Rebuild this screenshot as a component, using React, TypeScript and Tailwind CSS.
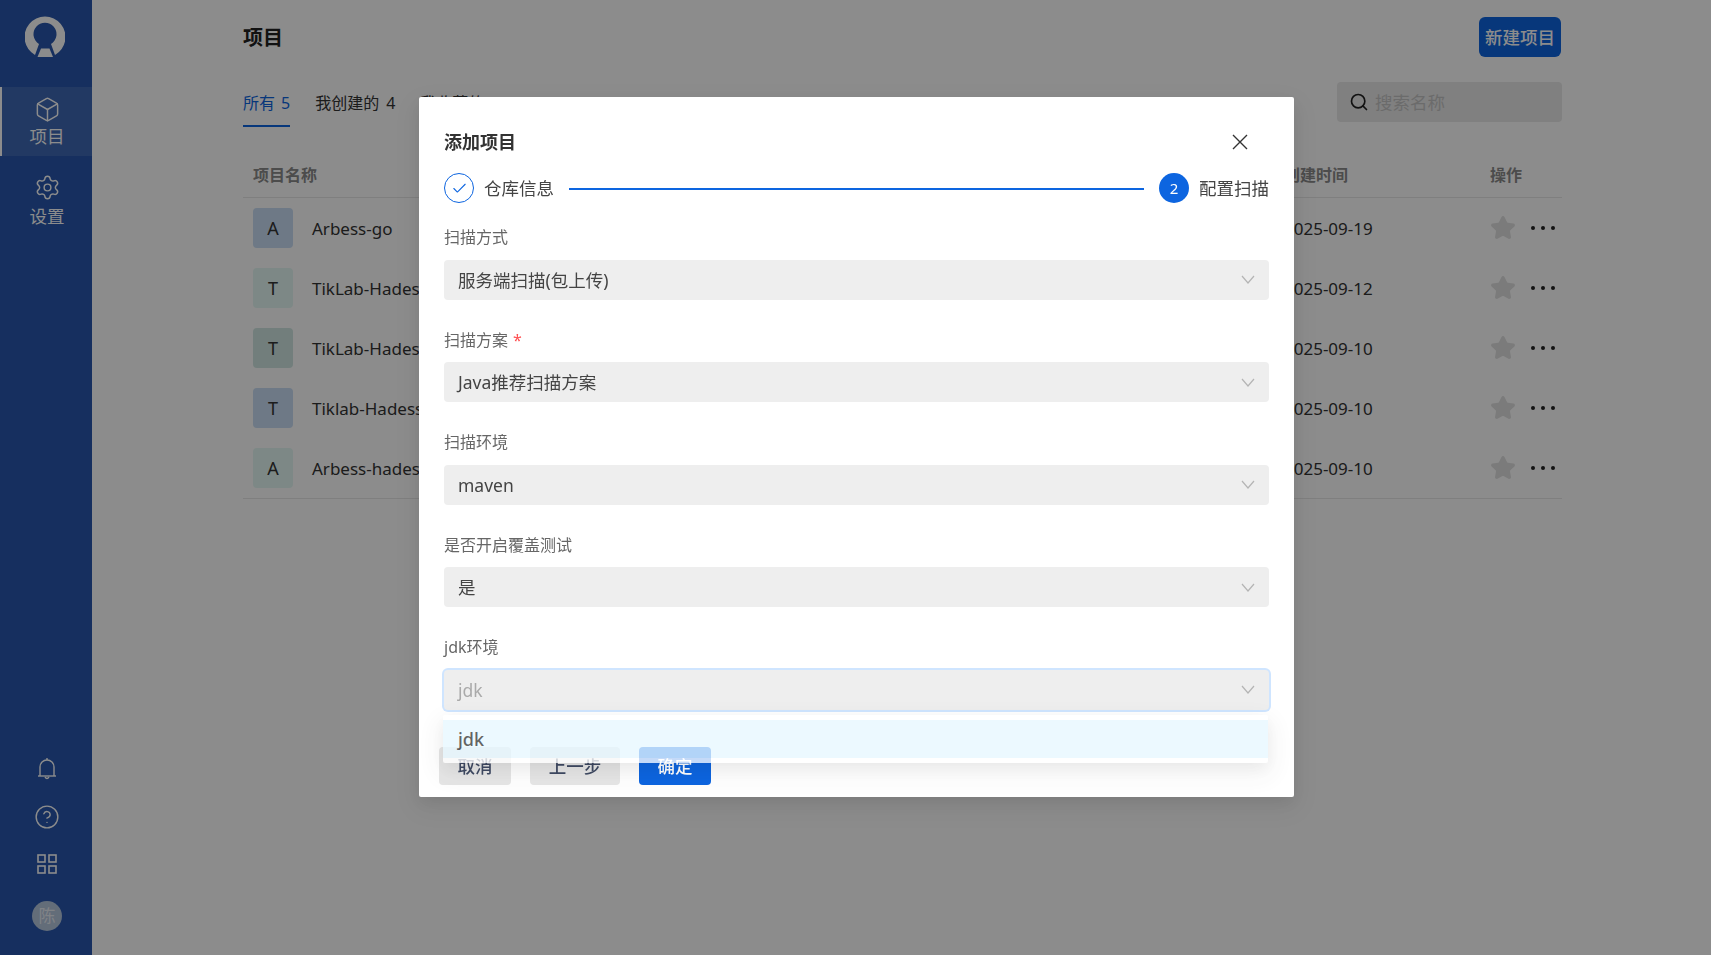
import React from 'react';
import { Box, Settings, CircleHelp, Search, Star, Check } from 'lucide-react';

const FONT = { fontFamily: '"Noto Sans", "Noto Sans CJK SC", sans-serif' };

type Project = { initial: string; name: string; color: string; date: string };

const projects: Project[] = [
  { initial: 'A', name: 'Arbess-go', color: 'bg-[#c8dcf4]', date: '2025-09-19' },
  { initial: 'T', name: 'TikLab-Hadess', color: 'bg-[#e4f8f4]', date: '2025-09-12' },
  { initial: 'T', name: 'TikLab-Hadess', color: 'bg-[#cfe6e2]', date: '2025-09-10' },
  { initial: 'T', name: 'Tiklab-Hadess', color: 'bg-[#c8dcf4]', date: '2025-09-10' },
  { initial: 'A', name: 'Arbess-hadess', color: 'bg-[#e4f8f4]', date: '2025-09-10' },
];

function Logo() {
  return (
    <svg viewBox="25 15 40 42" className="h-[42px] w-[40px]" fill="#ffffff">
      <path d="M35 54 A20.5 20.5 0 1 1 55 54 L51 43 A11.5 11.5 0 1 0 39 43 Z" />
      <path d="M37.5 56 L41 47.5 H49.5 L53 56 Z" />
    </svg>
  );
}

function Chevron({ className }: { className?: string }) {
  return (
    <svg viewBox="0 0 14 9" className={className} fill="none" stroke="#b4b4b4" strokeWidth="1.2">
      <path d="M1 1 L7 8 L13 1" />
    </svg>
  );
}

function Field({ label, value, required }: { label: string; value: string; required?: boolean }) {
  return (
    <div className="h-[102.5px]">
      <div className="mb-[10.5px] h-[24px] -translate-y-[0.5px] text-[16px] leading-[24px] text-[#666]">
        {label}
        {required && <span className="ml-[5px] text-[#ff4d4f]">*</span>}
      </div>
      <div className="flex h-[40px] items-center justify-between rounded-[4px] bg-[#eeeeee] pl-[14px] pr-[14px] text-[17.5px] text-[#444]">
        <span>{value}</span>
        <Chevron className="h-[9px] w-[14px]" />
      </div>
    </div>
  );
}

function Sidebar() {
  return (
    <aside className="flex w-[92px] shrink-0 flex-col bg-[#2857ad] text-white">
      <div className="flex h-[87px] justify-center pt-[16px] pr-[2px]">
        <Logo />
      </div>
      <div className="flex h-[69px] flex-col items-center border-l-2 border-white bg-white/10 pt-[9px]">
        <Box size={27} strokeWidth={1.3} className="shrink-0" />
        <span className="mt-[0.5px] text-[17.5px] leading-[24px]">项目</span>
      </div>
      <div className="flex h-[69px] flex-col items-center pt-[17.5px] pl-[2px]">
        <Settings size={27} strokeWidth={1.3} className="shrink-0" />
        <span className="mt-[3.5px] shrink-0 text-[17.5px] leading-[24px]">设置</span>
      </div>
      <div className="mt-auto flex flex-col items-center pb-[24px] pl-[2px]">
        <svg viewBox="0 0 20 24" className="h-[24px] w-[20px]" fill="none" stroke="currentColor" strokeWidth="1.4">
          <path d="M3 19 V10 A7 7 0 0 1 17 10 V19" />
          <path d="M1 19 H19" />
          <path d="M10 1 V3" />
          <path d="M8 20 Q10 23 12 20" />
        </svg>
        <CircleHelp size={26} strokeWidth={1.3} className="mt-[23px]" />
        <svg viewBox="0 0 20 20" className="mt-[24px] h-[20px] w-[20px]" fill="none" stroke="currentColor" strokeWidth="1.6">
          <rect x="1" y="1" width="7" height="7" />
          <rect x="12" y="1" width="7" height="7" />
          <rect x="1" y="12" width="7" height="7" />
          <rect x="12" y="12" width="7" height="7" />
        </svg>
        <div className="mt-[27px] flex h-[30px] w-[30px] items-center justify-center rounded-full bg-[#b5c6dd] text-[17px] text-white/70">
          陈
        </div>
      </div>
    </aside>
  );
}

function ProjectList() {
  return (
    <main className="min-w-0 flex-1 pl-[151px] pr-[149px] pt-[17px]">
      <div className="flex h-[40px] items-center justify-between">
        <h1 className="translate-y-px text-[20px] font-bold text-[#222]">项目</h1>
        <button className="mr-px h-[40px] w-[82px] rounded-[6px] bg-[#0d65e0] text-[17.5px] font-medium text-white">
          新建项目
        </button>
      </div>
      <div className="mt-[25px] flex h-[45px] items-start justify-between">
        <div className="flex gap-[25px] text-[16px] leading-[24px] text-[#333]">
          <div className="h-[45px] border-b-2 border-[#0d65e0] pt-[9px] text-[#0d65e0]">
            所有<span className="ml-[6px]">5</span>
          </div>
          <div className="h-[45px] pt-[9px]">
            我创建的<span className="ml-[7px]">4</span>
          </div>
          <div className="h-[45px] pt-[9px]">
            我收藏的<span className="ml-[7px]">0</span>
          </div>
        </div>
        <div className="flex h-[40px] w-[225px] items-center gap-[6px] rounded-[4px] bg-[#e9e9e9] pl-[12px] text-[17.5px] text-[#c4c4c4]">
          <Search size={20} strokeWidth={2} className="text-[#222]" />
          <span>搜索名称</span>
        </div>
      </div>
      <div className="mt-[26px] grid h-[45px] grid-cols-[1031px_206px_1fr] items-center border-b border-[#e8e8e8] text-[16px] font-semibold text-[#8a8a8a]">
        <div className="pl-[10px]">项目名称</div>
        <div className="pl-[10px]">创建时间</div>
        <div className="pl-[10px]">操作</div>
      </div>
      <div className="border-b border-[#e8e8e8]">
        {projects.map((p, i) => (
          <div key={i} className="grid h-[60px] grid-cols-[1031px_206px_1fr] items-center text-[#333]">
            <div className="flex items-center pl-[10px] text-[17px]">
              <div className={`flex h-[40px] w-[40px] items-center justify-center rounded-[4px] ${p.color} text-[18px]`}>
                {p.initial}
              </div>
              <span className="ml-[19px] translate-y-px">{p.name}</span>
            </div>
            <div className="translate-y-px pl-[10px] text-[17px]">{p.date}</div>
            <div className="flex items-center pl-[11px]">
              <Star size={26} fill="#e0e0e0" stroke="#e0e0e0" className="-ml-px -mt-px" />
              <div className="-mt-px ml-[15px] flex gap-[6px]">
                <span className="h-[4px] w-[4px] rounded-full bg-[#222]" />
                <span className="h-[4px] w-[4px] rounded-full bg-[#222]" />
                <span className="h-[4px] w-[4px] rounded-full bg-[#222]" />
              </div>
            </div>
          </div>
        ))}
      </div>
    </main>
  );
}

function AddProjectModal() {
  return (
    <div className="fixed inset-0 flex justify-center bg-black/45 pl-[2px] pt-[97px]">
      <div className="h-[700px] w-[875px] rounded-[2px] bg-white px-[25px] pt-[33px] shadow-[0_6px_16px_rgba(0,0,0,0.08),0_9px_28px_8px_rgba(0,0,0,0.05)]">
        <div className="flex h-[24px] items-center justify-between pr-[21px]">
          <h2 className="text-[18px] font-bold text-[#333]">添加项目</h2>
          <svg viewBox="0 0 16 16" className="h-[16px] w-[16px]" fill="none" stroke="#333" strokeWidth="1.4">
            <path d="M1 1 L15 15 M15 1 L1 15" />
          </svg>
        </div>
        <div className="mt-[19px] flex h-[30px] items-center text-[17.5px] text-[#444]">
          <div className="flex h-[30px] w-[30px] items-center justify-center rounded-full border border-[#0d65e0] text-[#0d65e0]">
            <Check size={17} strokeWidth={1.5} />
          </div>
          <span className="ml-[10px]">仓库信息</span>
          <div className="mx-[15px] mt-px h-[2px] flex-1 bg-[#0d65e0]" />
          <div className="flex h-[30px] w-[30px] items-center justify-center rounded-full bg-[#0d65e0] text-[15px] text-white">
            2
          </div>
          <span className="ml-[10px]">配置扫描</span>
        </div>

        <div className="mt-[22.4px]">
          <Field label="扫描方式" value="服务端扫描(包上传)" />
          <Field label="扫描方案" value="Java推荐扫描方案" required />
          <Field label="扫描环境" value="maven" />
          <Field label="是否开启覆盖测试" value="是" />
          <div className="h-[102.5px]">
            <div className="mb-[10.5px] h-[24px] -translate-y-[0.5px] text-[16px] leading-[24px] text-[#666]">jdk环境</div>
            <div className="relative">
              <div className="flex h-[40px] items-center justify-between rounded-[4px] bg-[#eeeeee] pl-[14px] pr-[14px] text-[17.5px] text-[#aaa] shadow-[0_0_0_2px_#cfe5ff]">
                <span>jdk</span>
                <Chevron className="h-[9px] w-[14px]" />
              </div>
              <div className="absolute left-[-1px] right-[1px] top-[45px] z-10 rounded-[2px] bg-white py-[5px] opacity-[0.76] shadow-[0_6px_16px_rgba(0,0,0,0.08),0_9px_28px_8px_rgba(0,0,0,0.05)]">
                <div className="flex h-[38px] items-center bg-[#e6f7ff] px-[15px] pt-px text-[18px] font-medium text-[#333]">jdk</div>
              </div>
            </div>
          </div>
        </div>

        <div className="-ml-[5px] mt-[9px] flex gap-[19px] text-[17.5px] font-medium">
          <button className="h-[38px] w-[72px] rounded-[4px] bg-[#e6e6e6] text-[#3f4a63]">取消</button>
          <button className="h-[38px] w-[90px] rounded-[4px] bg-[#e6e6e6] text-[#3f4a63]">上一步</button>
          <button className="h-[38px] w-[72px] rounded-[4px] bg-[#0d65e0] text-white">确定</button>
        </div>
      </div>
    </div>
  );
}

export default function App() {
  return (
    <div className="flex h-screen overflow-hidden bg-white" style={FONT}>
      <Sidebar />
      <ProjectList />
      <AddProjectModal />
    </div>
  );
}
